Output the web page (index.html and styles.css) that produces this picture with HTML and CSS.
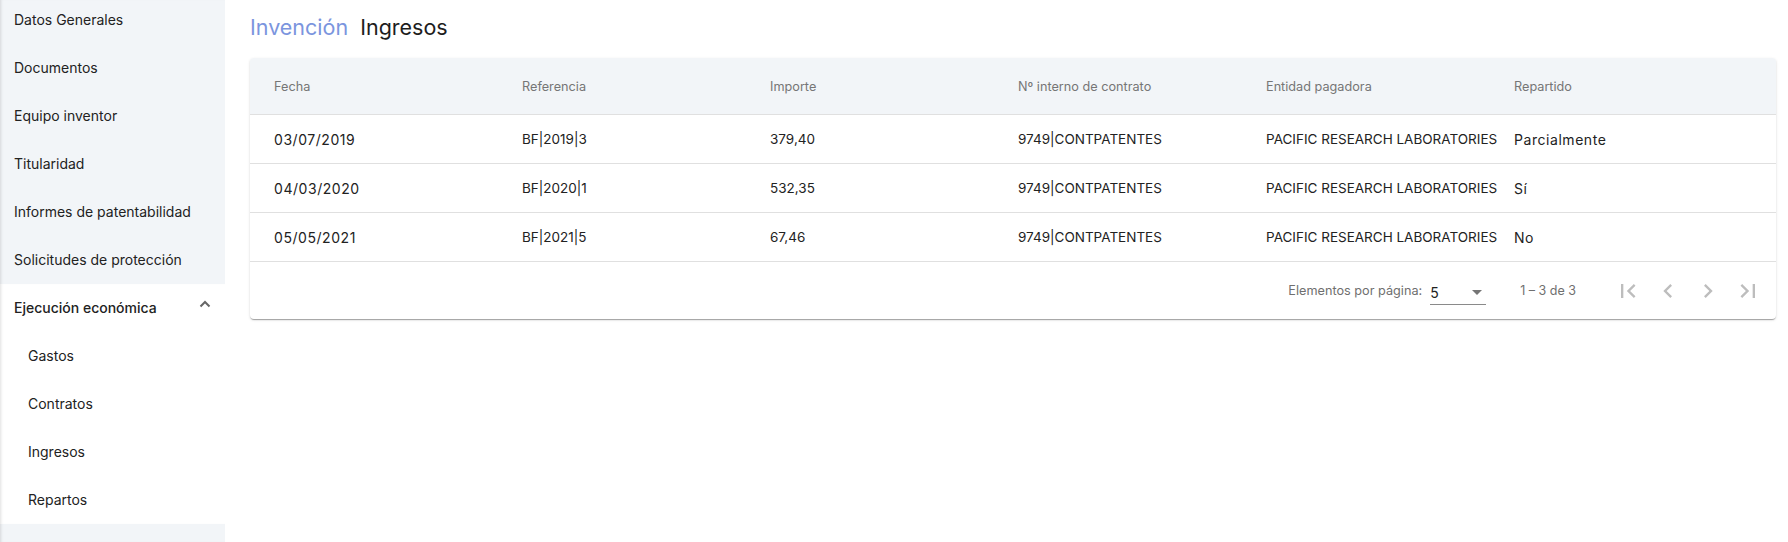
FILE: index.html
```html
<!DOCTYPE html>
<html lang="es">
<head>
<meta charset="utf-8">
<title>Invención Ingresos</title>
<link rel="stylesheet" href="styles.css">
</head>
<body>
<div class="layout">
  <nav class="sidebar">
    <ul class="nav">
      <li class="nav-item">Datos Generales</li>
      <li class="nav-item">Documentos</li>
      <li class="nav-item">Equipo inventor</li>
      <li class="nav-item">Titularidad</li>
      <li class="nav-item">Informes de patentabilidad</li>
      <li class="nav-item">Solicitudes de protección</li>
    </ul>
    <div class="panel">
      <div class="panel-header">
        <span>Ejecución económica</span>
        <svg class="indicator" width="12" height="8" viewBox="0 0 12 8"><polyline points="1.5,6.5 6,2 10.5,6.5" fill="none" stroke="#666" stroke-width="2"/></svg>
      </div>
      <ul class="subnav">
        <li class="sub-item">Gastos</li>
        <li class="sub-item">Contratos</li>
        <li class="sub-item">Ingresos</li>
        <li class="sub-item">Repartos</li>
      </ul>
    </div>
  </nav>
  <main class="main">
    <h1 class="title"><span class="crumb">Invención</span><span class="current">Ingresos</span></h1>
    <section class="card">
      <div class="row head">
        <div class="cell">Fecha</div>
        <div class="cell">Referencia</div>
        <div class="cell">Importe</div>
        <div class="cell">Nº interno de contrato</div>
        <div class="cell">Entidad pagadora</div>
        <div class="cell">Repartido</div>
      </div>
      <div class="row">
        <div class="cell wide">03/07/2019</div>
        <div class="cell">BF|2019|3</div>
        <div class="cell">379,40</div>
        <div class="cell">9749|CONTPATENTES</div>
        <div class="cell">PACIFIC RESEARCH LABORATORIES</div>
        <div class="cell wide">Parcialmente</div>
      </div>
      <div class="row">
        <div class="cell wide">04/03/2020</div>
        <div class="cell">BF|2020|1</div>
        <div class="cell">532,35</div>
        <div class="cell">9749|CONTPATENTES</div>
        <div class="cell">PACIFIC RESEARCH LABORATORIES</div>
        <div class="cell wide">Sí</div>
      </div>
      <div class="row">
        <div class="cell wide">05/05/2021</div>
        <div class="cell">BF|2021|5</div>
        <div class="cell">67,46</div>
        <div class="cell">9749|CONTPATENTES</div>
        <div class="cell">PACIFIC RESEARCH LABORATORIES</div>
        <div class="cell wide">No</div>
      </div>
      <div class="paginator">
        <span class="page-label">Elementos por página:</span>
        <div class="page-select">
          <span class="page-value">5</span>
          <svg width="10" height="5" viewBox="0 0 10 5"><path d="M0 0L5 5L10 0z" fill="#757575"/></svg>
        </div>
        <span class="range">1 – 3 de 3</span>
        <div class="buttons">
          <span class="pbtn"><svg width="28" height="28" viewBox="0 0 24 24"><path d="M18.41 16.59L13.82 12l4.59-4.59L17 6l-6 6 6 6zM6 6h2v12H6z"/></svg></span>
          <span class="pbtn"><svg width="28" height="28" viewBox="0 0 24 24"><path d="M15.41 7.41L14 6l-6 6 6 6 1.41-1.41L10.83 12z"/></svg></span>
          <span class="pbtn"><svg width="28" height="28" viewBox="0 0 24 24"><path d="M10 6L8.59 7.41 13.17 12l-4.58 4.59L10 18l6-6z"/></svg></span>
          <span class="pbtn"><svg width="28" height="28" viewBox="0 0 24 24"><path d="M5.59 7.41L10.18 12l-4.59 4.59L7 18l6-6-6-6zM16 6h2v12h-2z"/></svg></span>
        </div>
      </div>
    </section>
  </main>
</div>
</body>
</html>
```

FILE: styles.css
```css
* { box-sizing: border-box; }
html, body { margin: 0; padding: 0; background: #fff; }
body {
  font-family: Inter, "Noto Sans", sans-serif;
  color: #212121;
  width: 1788px;
  height: 542px;
  overflow: hidden;
}
.layout {
  display: flex;
  height: 542px;
}
.sidebar {
  width: 225px;
  flex: none;
  background: #f2f5f8;
  box-shadow: inset 3px 0 3px -2px rgba(0,0,0,0.12);
  height: 542px;
}
ul { list-style: none; margin: 0; padding: 0; }
.nav { margin-top: -4px; }
.nav-item {
  height: 48px;
  display: flex;
  align-items: center;
  padding: 0 0 2px 14px;
  font-size: 14px;
  color: #222;
}
.panel {
  background: #fff;
  box-shadow: inset 3px 0 3px -2px rgba(0,0,0,0.12);
}
.panel-header {
  height: 48px;
  display: flex;
  align-items: center;
  justify-content: space-between;
  padding: 0 14px 2px 14px;
  font-size: 14px;
  font-weight: 500;
  color: #222;
}
.indicator { margin-top: -6px; }
.sub-item {
  height: 48px;
  display: flex;
  align-items: center;
  padding: 0 0 2px 28px;
  font-size: 14px;
  color: #222;
}
.main {
  flex: 1;
  padding: 12px 12px 0 25px;
}
.title {
  margin: 0 0 16px 0;
  font-size: 21.5px;
  line-height: 30px;
  font-weight: 400;
  display: flex;
  gap: 12px;
}
.crumb { color: #7b95de; }
.current { color: #1d1d1d; }
.card {
  background: #fff;
  border-radius: 4px;
  box-shadow: 0 2px 1px -1px rgba(0,0,0,.2), 0 1px 1px 0 rgba(0,0,0,.14), 0 1px 3px 0 rgba(0,0,0,.12);
  overflow: hidden;
}
.row {
  display: grid;
  grid-template-columns: 248px 248px 248px 248px 248px 1fr;
  padding-left: 24px;
  height: 49px;
  align-items: center;
  border-bottom: 1px solid #e0e0e0;
  font-size: 13.5px;
  color: #222;
}
.row.head {
  height: 57px;
  background: #f2f5f8;
  font-size: 12.7px;
  color: #767676;
}
.cell { white-space: nowrap; }
.cell.wide { font-size: 14px; letter-spacing: 0.55px; }
.paginator {
  height: 57px;
  display: flex;
  align-items: center;
  justify-content: flex-end;
  padding: 0 8px;
  font-size: 12.7px;
  color: #6f6f6f;
}
.page-label { margin-right: 8px; }
.page-select {
  width: 56px;
  height: 24px;
  margin-top: 4px;
  border-bottom: 1px solid #8a8a8a;
  display: flex;
  align-items: center;
  justify-content: space-between;
  padding-right: 4px;
  font-size: 14px;
  color: #222;
}
.range { margin: 0 32px 0 34px; font-size: 12.5px; }
.buttons { display: flex; }
.pbtn {
  width: 40px;
  height: 40px;
  display: flex;
  align-items: center;
  justify-content: center;
  fill: #bdbdbd;
}
```
